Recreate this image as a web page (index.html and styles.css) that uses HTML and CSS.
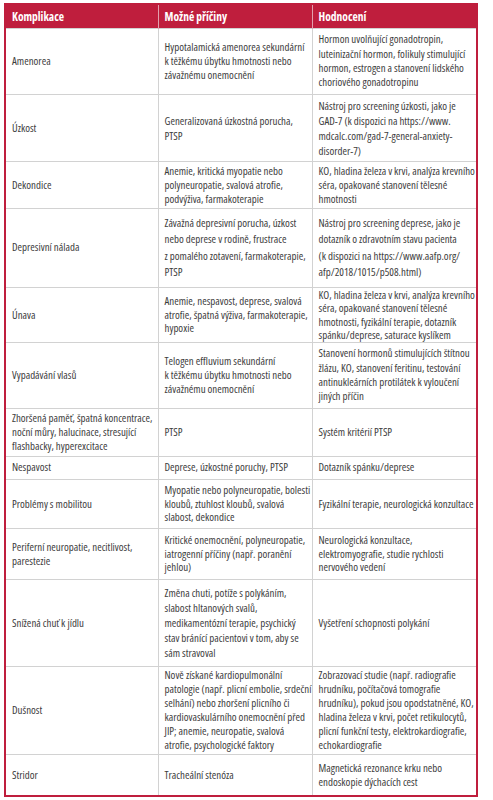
FILE: index.html
```html
<!DOCTYPE html>
<html lang="cs">
<head>
    <meta charset="UTF-8">
    <meta name="viewport" content="width=device-width, initial-scale=1.0">
    <title>Komplikace po hospitalizaci na JIP</title>
    <link rel="stylesheet" href="styles.css">
</head>
<body>
    <table class="complications">
        <colgroup>
            <col class="col-complication">
            <col class="col-cause">
            <col class="col-assessment">
        </colgroup>
        <thead>
            <tr>
                <th>Komplikace</th>
                <th>Možné příčiny</th>
                <th>Hodnocení</th>
            </tr>
        </thead>
        <tbody>
            <tr class="row-amenorea">
                <td>Amenorea</td>
                <td>Hypotalamická amenorea sekundární<br>k&nbsp;těžkému úbytku hmotnosti nebo<br>závažnému onemocnění</td>
                <td>Hormon uvolňující gonadotropin,<br>luteinizační hormon, folikuly stimulující<br>hormon, estrogen a&nbsp;stanovení lidského<br>choriového gonadotropinu</td>
            </tr>
            <tr class="row-anxiety">
                <td>Úzkost</td>
                <td>Generalizovaná úzkostná porucha,<br>PTSP</td>
                <td>Nástroj pro screening úzkosti, jako je<br>GAD-7 (k&nbsp;dispozici na https://www.<br>mdcalc.com/gad-7-general-anxiety-<br>disorder-7)</td>
            </tr>
            <tr class="row-deconditioning">
                <td>Dekondice</td>
                <td>Anemie, kritická myopatie nebo<br>polyneuropatie, svalová atrofie,<br>podvýživa, farmakoterapie</td>
                <td>KO, hladina železa v&nbsp;krvi, analýza krevního<br>séra, opakované stanovení tělesné<br>hmotnosti</td>
            </tr>
            <tr class="row-depression">
                <td>Depresivní nálada</td>
                <td>Závažná depresivní porucha, úzkost<br>nebo deprese v&nbsp;rodině, frustrace<br>z&nbsp;pomalého zotavení, farmakoterapie,<br>PTSP</td>
                <td>Nástroj pro screening deprese, jako je<br>dotazník o&nbsp;zdravotním stavu pacienta<br>(k&nbsp;dispozici na https://www.aafp.org/<br>afp/2018/1015/p508.html)</td>
            </tr>
            <tr class="row-fatigue">
                <td>Únava</td>
                <td>Anemie, nespavost, deprese, svalová<br>atrofie, špatná výživa, farmakoterapie,<br>hypoxie</td>
                <td>KO, hladina železa v&nbsp;krvi, analýza krevního<br>séra, opakované stanovení tělesné<br>hmotnosti, fyzikální terapie, dotazník<br>spánku/deprese, saturace kyslíkem</td>
            </tr>
            <tr class="row-hair">
                <td>Vypadávání vlasů</td>
                <td>Telogen effluvium sekundární<br>k&nbsp;těžkému úbytku hmotnosti nebo<br>závažnému onemocnění</td>
                <td>Stanovení hormonů stimulujících štítnou<br>žlázu, KO, stanovení feritinu, testování<br>antinukleárních protilátek k&nbsp;vyloučení<br>jiných příčin</td>
            </tr>
            <tr class="row-memory">
                <td>Zhoršená paměť, špatná koncentrace,<br>noční můry, halucinace, stresující<br>flashbacky, hyperexcitace</td>
                <td>PTSP</td>
                <td>Systém kritérií PTSP</td>
            </tr>
            <tr class="row-insomnia">
                <td>Nespavost</td>
                <td>Deprese, úzkostné poruchy, PTSP</td>
                <td>Dotazník spánku/deprese</td>
            </tr>
            <tr class="row-mobility">
                <td>Problémy s&nbsp;mobilitou</td>
                <td>Myopatie nebo polyneuropatie, bolesti<br>kloubů, ztuhlost kloubů, svalová<br>slabost, dekondice</td>
                <td>Fyzikální terapie, neurologická konzultace</td>
            </tr>
            <tr class="row-neuropathy">
                <td>Periferní neuropatie, necitlivost,<br>parestezie</td>
                <td>Kritické onemocnění, polyneuropatie,<br>iatrogenní příčiny (např. poranění<br>jehlou)</td>
                <td>Neurologická konzultace,<br>elektromyografie, studie rychlosti<br>nervového vedení</td>
            </tr>
            <tr class="row-appetite">
                <td>Snížená chuť k&nbsp;jídlu</td>
                <td>Změna chuti, potíže s&nbsp;polykáním,<br>slabost hltanových svalů,<br>medikamentózní terapie, psychický<br>stav bránící pacientovi v&nbsp;tom, aby se<br>sám stravoval</td>
                <td>Vyšetření schopnosti polykání</td>
            </tr>
            <tr class="row-dyspnea">
                <td>Dušnost</td>
                <td>Nově získané kardiopulmonální<br>patologie (např. plicní embolie, srdeční<br>selhání) nebo zhoršení plicního či<br>kardiovaskulárního onemocnění před<br>JIP; anemie, neuropatie, svalová<br>atrofie, psychologické faktory</td>
                <td>Zobrazovací studie (např. radiografie<br>hrudníku, počítačová tomografie<br>hrudníku), pokud jsou opodstatněné, KO,<br>hladina železa v&nbsp;krvi, počet retikulocytů,<br>plicní funkční testy, elektrokardiografie,<br>echokardiografie</td>
            </tr>
            <tr class="row-stridor">
                <td>Stridor</td>
                <td>Tracheální stenóza</td>
                <td>Magnetická rezonance krku nebo<br>endoskopie dýchacích cest</td>
            </tr>
        </tbody>
    </table>
</body>
</html>
```
FILE: styles.css
```css
* {
    box-sizing: border-box;
}

body {
    margin: 0;
    padding: 3px 0 0 4px;
    background: #fff;
    color: #3d3d3d;
    font-family: "Open Sans", "Liberation Sans", sans-serif;
    font-stretch: 75%;
    font-size: 10.9px;
}

.complications {
    width: 474px;
    border-collapse: collapse;
    table-layout: fixed;
    border: 2px solid #bf1e3d;
}

.col-complication {
    width: 153px;
}

.col-cause {
    width: 154px;
}

th {
    height: 24px;
    padding: 0 6px;
    background: #bf1e3d;
    color: #fff;
    font-size: 11.5px;
    font-weight: 700;
    text-align: left;
}

th + th {
    border-left: 1px solid #e2a0ae;
}

td {
    padding: 2px 6px;
    border: 1px solid #d2d2d2;
    line-height: 14.3px;
    white-space: nowrap;
    vertical-align: middle;
}

/* row heights follow the printed table */
.row-amenorea { height: 66px; }
.row-anxiety { height: 67px; }
.row-anxiety td { line-height: 15px; }
.row-deconditioning { height: 47px; }
.row-deconditioning td { line-height: 14px; }
.row-depression { height: 79px; }
.row-depression td { line-height: 16.5px; }
.row-fatigue { height: 55px; }
.row-fatigue td { line-height: 13.5px; padding: 0 6px; }
.row-hair { height: 66px; }
.row-memory { height: 48px; }
.row-memory td { line-height: 14px; padding: 1px 6px; }
.row-insomnia { height: 23px; }
.row-mobility { height: 49px; }
.row-mobility td { line-height: 13.5px; }
.row-neuropathy { height: 51px; }
.row-neuropathy td { line-height: 13.5px; }
.row-appetite { height: 87px; }
.row-appetite td { line-height: 15px; }
.row-dyspnea { height: 88px; }
.row-dyspnea td { line-height: 14px; padding: 1px 6px; }
.row-stridor { height: 42px; }
.row-stridor td { line-height: 13.5px; }
```
